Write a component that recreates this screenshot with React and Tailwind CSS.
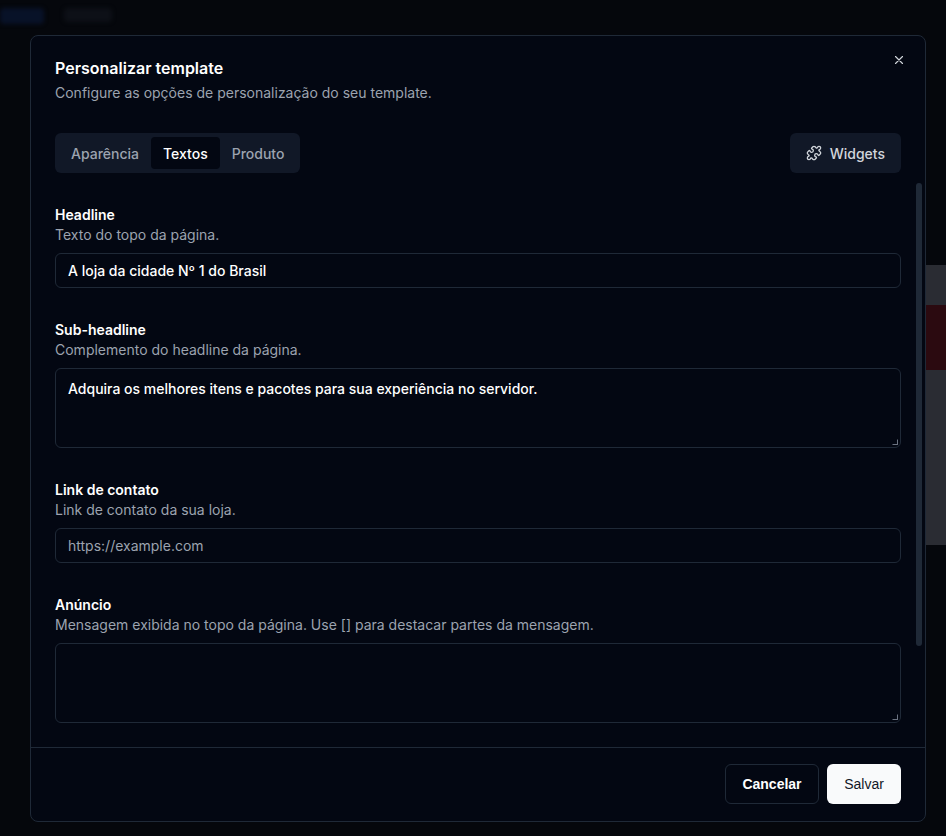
import React from "react";

function Field({ label, desc, children }) {
  return (
    <div className="flex flex-col">
      <div className="text-[14px] font-semibold text-white leading-5">{label}</div>
      <div className="text-[14px] text-[#9ca3af] leading-5 mb-2">{desc}</div>
      {children}
    </div>
  );
}

export default function App() {
  return (
    <div className="relative w-[946px] h-[836px] overflow-hidden bg-[#05070c]" style={{ fontFamily: "Inter, 'Noto Sans', sans-serif" }}>
      <div className="absolute left-0 top-0 w-full h-full">
        <div className="absolute left-[0px] top-[8px] w-[44px] h-[16px] bg-[#081228] rounded blur-[2px]" />
        <div className="absolute left-[64px] top-[8px] w-[48px] h-[14px] bg-[#0d1017] rounded blur-[2px]" />
        <div className="absolute left-[926px] top-[265px] w-[20px] h-[40px] bg-[#2a2c33]" />
        <div className="absolute left-[926px] top-[305px] w-[20px] h-[65px] bg-[#2b0a10]" />
        <div className="absolute left-[926px] top-[370px] w-[20px] h-[175px] bg-[#2a2c33]" />
      </div>
      <div className="absolute left-[30px] top-[35px] w-[896px] h-[787px] bg-[#030712] border border-[#1f2937] rounded-lg flex flex-col">
        <button className="absolute right-[19px] top-[17px] text-[#d1d5db]">
          <svg width="14" height="14" viewBox="0 0 24 24" fill="none" stroke="currentColor" strokeWidth="2" strokeLinecap="round"><path d="M18 6 6 18M6 6l12 12" /></svg>
        </button>
        <div className="px-6 pt-[20px]">
          <div className="text-[16px] font-semibold text-white leading-6">Personalizar template</div>
          <div className="text-[14px] text-[#9ca3af] leading-5 mt-[3px]">Configure as opções de personalização do seu template.</div>
          <div className="flex justify-between mt-[30px]">
            <div className="flex items-center bg-[#111827] rounded-md p-1 h-[40px]">
              <div className="px-[12px] h-[32px] flex items-center text-[14px] font-medium text-[#9ca3af]">Aparência</div>
              <div className="px-[12px] h-[32px] flex items-center text-[14px] font-medium text-white bg-[#030712] rounded">Textos</div>
              <div className="px-[12px] h-[32px] flex items-center text-[14px] font-medium text-[#9ca3af]">Produto</div>
            </div>
            <div className="flex items-center gap-2 bg-[#111827] rounded-md px-4 h-[40px] text-[14px] font-medium text-[#d1d5db]">
              <svg width="16" height="16" viewBox="0 0 24 24" fill="none" stroke="currentColor" strokeWidth="2" strokeLinecap="round" strokeLinejoin="round"><path d="M15.39 4.39a1 1 0 0 0 1.68-.474 2.5 2.5 0 1 1 3.014 3.015 1 1 0 0 0-.474 1.68l1.683 1.682a2.414 2.414 0 0 1 0 3.414L19.61 15.39a1 1 0 0 1-1.68-.474 2.5 2.5 0 1 0-3.014 3.015 1 1 0 0 1 .474 1.68l-1.683 1.682a2.414 2.414 0 0 1-3.414 0L8.61 19.61a1 1 0 0 0-1.68.474 2.5 2.5 0 1 1-3.014-3.015 1 1 0 0 0 .474-1.68l-1.683-1.682a2.414 2.414 0 0 1 0-3.414L4.39 8.61a1 1 0 0 1 1.68.474 2.5 2.5 0 1 0 3.014-3.015 1 1 0 0 1-.474-1.68l1.683-1.682a2.414 2.414 0 0 1 3.414 0z" /></svg>
              Widgets
            </div>
          </div>
        </div>
        <div className="relative flex-1 overflow-hidden mt-[8px]">
          <div className="absolute right-[3px] top-[2px] w-[6px] h-[463px] bg-[#1f2937] rounded-full" />
          <div className="px-6 pt-[24px] flex flex-col gap-[32px]">
            <Field label="Headline" desc="Texto do topo da página.">
              <div className="h-[35px] border border-[#1f2937] rounded-md px-3 flex items-center text-[14px] font-medium text-white">A loja da cidade Nº 1 do Brasil</div>
            </Field>
            <Field label="Sub-headline" desc="Complemento do headline da página.">
              <div className="relative h-[80px] border border-[#1f2937] rounded-md px-3 pt-[9px] text-[14px] font-medium text-white">Adquira os melhores itens e pacotes para sua experiência no servidor.
                <span className="absolute right-[2px] bottom-[2px] w-[6px] h-[6px] border-b border-r border-[#6b7280]" style={{ clipPath: "polygon(100% 0,100% 100%,0 100%)" }} />
              </div>
            </Field>
            <Field label="Link de contato" desc="Link de contato da sua loja.">
              <div className="h-[35px] border border-[#1f2937] rounded-md px-3 flex items-center text-[14px] text-[#9ca3af]">https://example.com</div>
            </Field>
            <Field label="Anúncio" desc="Mensagem exibida no topo da página. Use [] para destacar partes da mensagem.">
              <div className="relative h-[80px] border border-[#1f2937] rounded-md">
                <span className="absolute right-[2px] bottom-[2px] w-[6px] h-[6px] border-b border-r border-[#6b7280]" style={{ clipPath: "polygon(100% 0,100% 100%,0 100%)" }} />
              </div>
            </Field>
          </div>
        </div>
        <div className="border-t border-[#1f2937] h-[74px] flex items-center justify-end gap-2 px-6 pb-[1px]">
          <button className="h-[40px] w-[94px] border border-[#1f2937] rounded-md text-[14px] font-bold text-white" style={{ fontFamily: "'Liberation Sans', Arial, sans-serif" }}>Cancelar</button>
          <button className="h-[40px] w-[74px] bg-[#f9fafb] rounded-md text-[14px] text-[#111827]" style={{ fontFamily: "'Liberation Sans', Arial, sans-serif" }}>Salvar</button>
        </div>
      </div>
    </div>
  );
}
